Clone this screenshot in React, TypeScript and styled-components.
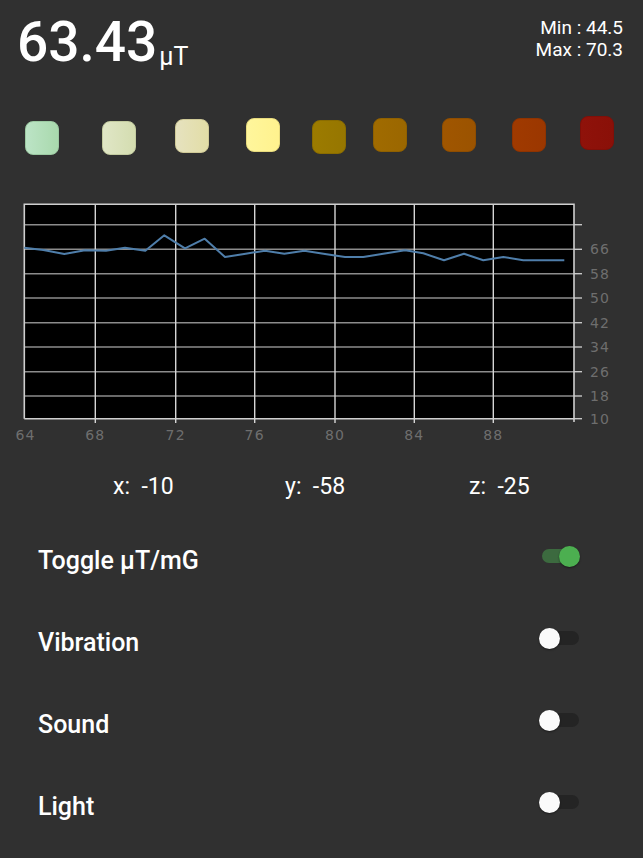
import React from "react";
import styled, { createGlobalStyle } from "styled-components";

const GlobalStyle = createGlobalStyle`
  html, body {
    margin: 0;
    padding: 0;
    background: #303030;
  }
  body {
    font-family: Roboto, "Noto Sans", "Liberation Sans", sans-serif;
    color: #ffffff;
  }
`;

const Page = styled.div`
  width: 643px;
  min-height: 858px;
  background: #303030;
  overflow: hidden;
`;

const Header = styled.header`
  display: flex;
  justify-content: space-between;
  align-items: flex-start;
  height: 116px;
  box-sizing: border-box;
  padding: 14px 20px 0 17px;
`;

const Reading = styled.div`
  font-size: 55px;
  line-height: 56px;
  font-weight: 500;
  color: #ffffff;
  white-space: nowrap;
`;

const Unit = styled.span`
  font-size: 25px;
  font-weight: 400;
  margin-left: 2px;
  vertical-align: -4px;
`;

const Range = styled.div`
  text-align: right;
  font-size: 19px;
  font-weight: 400;
  line-height: 22px;
  padding-top: 3px;
  color: #ffffff;
`;

const Palette = styled.div`
  display: flex;
  align-items: flex-start;
  height: 40px;
  padding: 0 0 0 25px;
`;

const Swatch = styled.div<{ $from: string; $to: string; $dy: number; $edge: string; $gap: number }>`
  flex: none;
  width: 34px;
  height: 34px;
  box-sizing: border-box;
  border-radius: 8px;
  margin-top: ${(p) => p.$dy}px;
  margin-left: ${(p) => p.$gap}px;
  background: linear-gradient(90deg, ${(p) => p.$from}, ${(p) => p.$to});
  border: 1px solid ${(p) => p.$edge};
`;

const Chart = styled.svg`
  display: block;
  width: 643px;
  height: 252px;
  margin-top: 40px;
`;

const AxisText = styled.text`
  font-family: "DejaVu Sans", Verdana, sans-serif;
  font-size: 14px;
  letter-spacing: 1.2px;
  fill: #6e6e6e;
`;

const Axes = styled.div`
  display: grid;
  grid-template-columns: 172px 184px auto;
  padding-left: 113px;
  margin-top: 25px;
  height: 28px;
  font-size: 23px;
  line-height: 28px;
  white-space: pre;
  color: #ffffff;
`;

const Settings = styled.section`
  margin-top: 19px;
  display: flex;
  flex-direction: column;
`;

const Row = styled.div`
  display: flex;
  align-items: center;
  justify-content: space-between;
  height: 82px;
  padding: 0 63px 0 38px;
`;

const Label = styled.span`
  font-size: 25px;
  line-height: 28px;
  font-weight: 500;
  color: #ffffff;
`;

const Switch = styled.div`
  position: relative;
  width: 41px;
  height: 21px;
  margin-bottom: 10px;
`;

const Track = styled.div<{ $on: boolean }>`
  position: absolute;
  left: 3px;
  right: 1px;
  top: 3.5px;
  height: 14px;
  border-radius: 7px;
  background: ${(p) => (p.$on ? "#3c6a3f" : "#242424")};
`;

const Thumb = styled.div<{ $on: boolean }>`
  position: absolute;
  top: 0;
  ${(p) => (p.$on ? "right: 0;" : "left: 0;")}
  width: 21px;
  height: 21px;
  border-radius: 50%;
  background: ${(p) => (p.$on ? "#4caf50" : "#fafafa")};
  box-shadow: 0 1px 2px rgba(0, 0, 0, 0.45);
`;

const swatches = [
  { from: "#bce4c6", to: "#a9d9ad", dy: 5, edge: "#9cc9a2", gap: 0 },
  { from: "#e0e6c6", to: "#d4ddb0", dy: 5, edge: "#c3cba0", gap: 43 },
  { from: "#e6e2bf", to: "#e2dda6", dy: 3, edge: "#cfc997", gap: 39 },
  { from: "#fff69c", to: "#fff28e", dy: 2, edge: "#e7da7e", gap: 37 },
  { from: "#9c7b00", to: "#967600", dy: 4, edge: "#8a6c00", gap: 32 },
  { from: "#a06b00", to: "#9b6700", dy: 2, edge: "#8f6000", gap: 27 },
  { from: "#a05600", to: "#9b5300", dy: 2, edge: "#8f4d00", gap: 35 },
  { from: "#a03a00", to: "#9b3700", dy: 2, edge: "#8f3300", gap: 36 },
  { from: "#8f120a", to: "#8a1008", dy: 0, edge: "#800f08", gap: 34 },
];

const hLines = [224.7, 249.3, 273.7, 298, 322.7, 347, 371.7, 396];
const yLabels = ["66", "58", "50", "42", "34", "26", "18", "10"];
const yLabelY = [249.3, 273.7, 298, 322.7, 347, 371.7, 396, 418.7];
const vLines = [95.3, 175.7, 254.7, 335, 414.3, 493.3];
const xLabels = [
  { x: 25.5, t: "64" },
  { x: 95.3, t: "68" },
  { x: 175.7, t: "72" },
  { x: 254.7, t: "76" },
  { x: 335, t: "80" },
  { x: 414.3, t: "84" },
  { x: 493.3, t: "88" },
];

const data: [number, number][] = [
  [24.3, 247.7], [43.3, 250], [64.3, 254], [85, 250.3], [106, 250.7],
  [125, 247.7], [145.3, 250.7], [164.3, 235.3], [185, 248.3], [204.7, 238.7],
  [225, 257], [245.7, 253.7], [265, 250.7], [284.3, 253.7], [304.3, 250.7],
  [325, 254], [345, 257], [363.3, 257], [383.3, 253.7], [405, 250.3],
  [423.3, 253.3], [444, 260.3], [464, 253.7], [483.3, 260.3], [503.3, 257],
  [523.3, 260.3], [564.3, 260.3],
];

const settings = [
  { label: "Toggle μT/mG", on: true },
  { label: "Vibration", on: false },
  { label: "Sound", on: false },
  { label: "Light", on: false },
];

export default function App() {
  return (
    <Page>
      <GlobalStyle />
      <Header>
        <Reading>
          63.43<Unit>μT</Unit>
        </Reading>
        <Range>
          <div>Min : 44.5</div>
          <div>Max : 70.3</div>
        </Range>
      </Header>

      <Palette>
        {swatches.map((s, i) => (
          <Swatch key={i} $from={s.from} $to={s.to} $dy={s.dy} $edge={s.edge} $gap={s.gap} />
        ))}
      </Palette>

      <Chart viewBox="0 196 643 252">
        <rect x={24.3} y={204.3} width={549.7} height={214.4} fill="#000" />
        {hLines.map((y) => (
          <line key={y} x1={24.3} x2={574} y1={y} y2={y} stroke="#8c8c8c" strokeWidth={1.4} />
        ))}
        {vLines.map((x) => (
          <line key={x} x1={x} x2={x} y1={204.3} y2={423} stroke="#d6d6d6" strokeWidth={1.4} />
        ))}
        {[...hLines, 418.7].map((y) => (
          <line key={"t" + y} x1={574} x2={582} y1={y} y2={y} stroke="#c8c8c8" strokeWidth={1.4} />
        ))}
        <polyline
          points="24.3,418.7 24.3,204.3 574,204.3 574,422"
          fill="none"
          stroke="#cfcfcf"
          strokeWidth={1.6}
        />
        <line x1={24.3} x2={574} y1={418.7} y2={418.7} stroke="#cfcfcf" strokeWidth={1.6} />
        <polyline
          points={data.map((p) => p.join(",")).join(" ")}
          fill="none"
          stroke="#4f7eaa"
          strokeWidth={2}
          strokeLinejoin="round"
        />
        {yLabels.map((t, i) => (
          <AxisText key={t} x={590} y={yLabelY[i] + 5}>
            {t}
          </AxisText>
        ))}
        {xLabels.map((l) => (
          <AxisText key={l.t} x={l.x} y={439.5} textAnchor="middle">
            {l.t}
          </AxisText>
        ))}
      </Chart>

      <Axes>
        <span>x:  -10</span>
        <span>y:  -58</span>
        <span>z:  -25</span>
      </Axes>

      <Settings>
        {settings.map((s) => (
          <Row key={s.label}>
            <Label>{s.label}</Label>
            <Switch>
              <Track $on={s.on} />
              <Thumb $on={s.on} />
            </Switch>
          </Row>
        ))}
      </Settings>
    </Page>
  );
}
